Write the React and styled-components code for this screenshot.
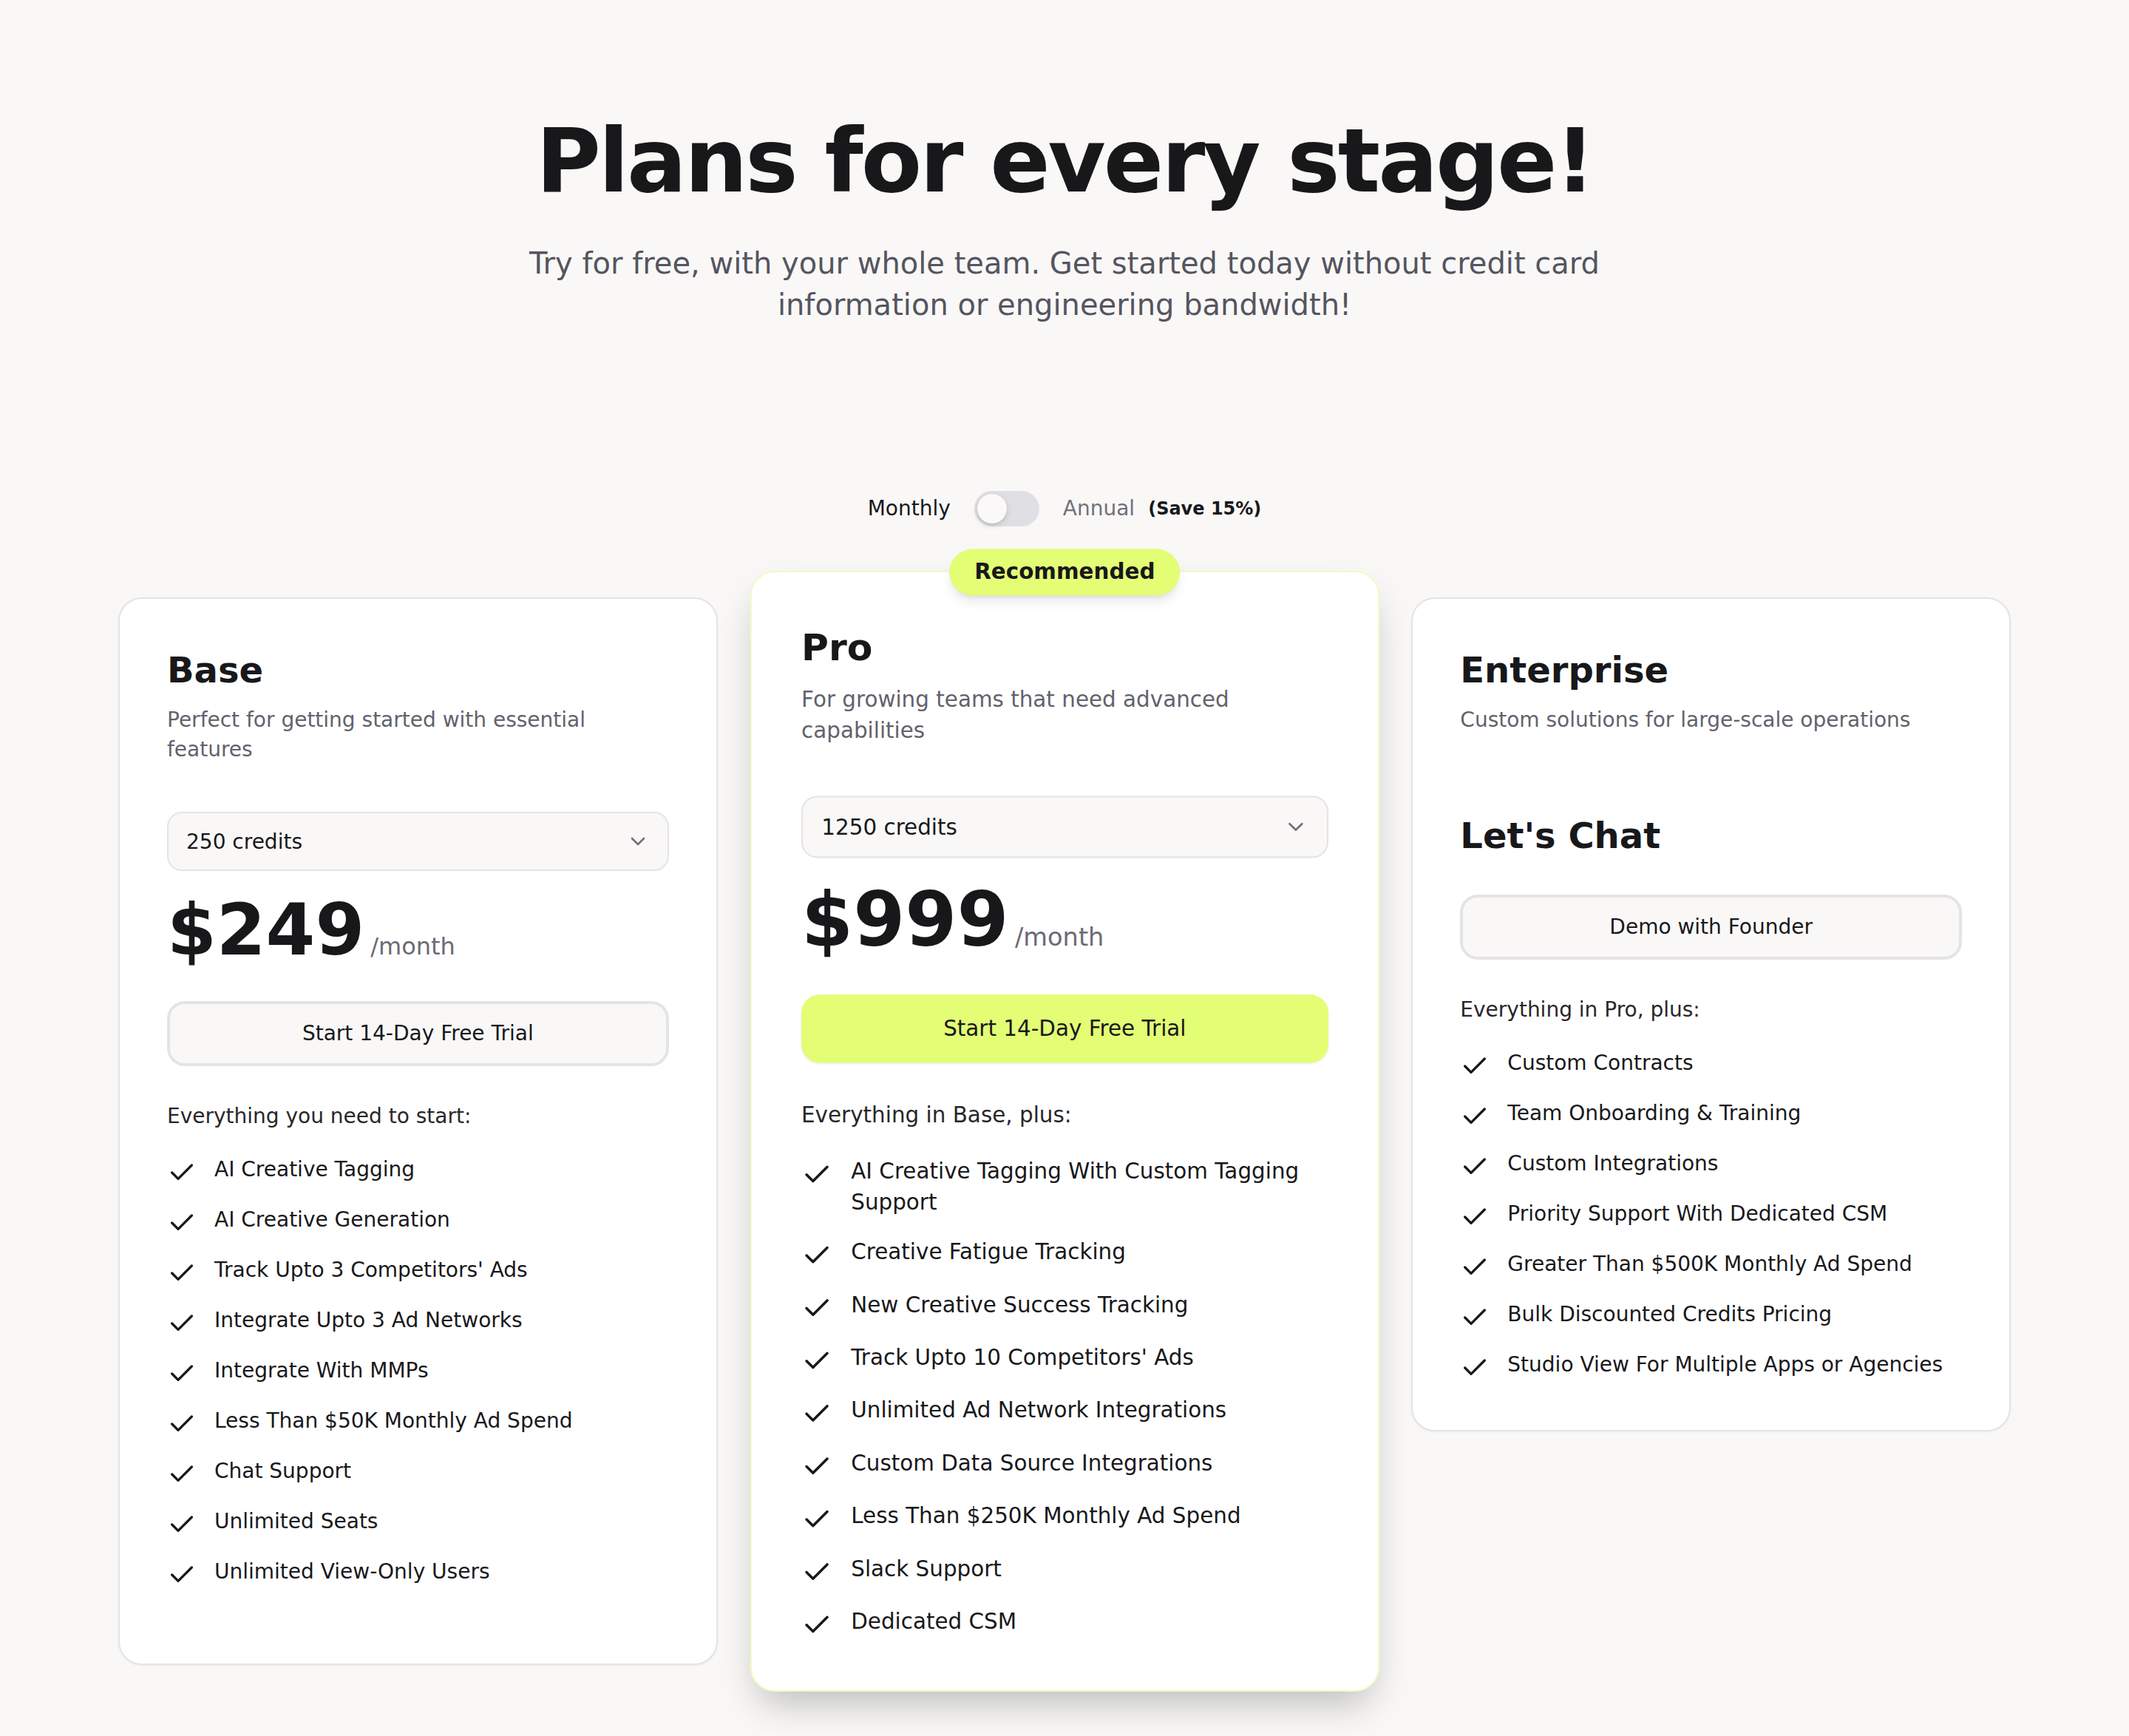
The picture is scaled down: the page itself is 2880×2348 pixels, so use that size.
import React from 'react';
import styled, { createGlobalStyle } from 'styled-components';
import { Check, ChevronDown } from 'lucide-react';

const LIME = '#e3fd75';

const GlobalStyle = createGlobalStyle`
  html, body { margin: 0; padding: 0; background: #f9f8f7; }
  body { font-family: "DejaVu Sans", "Noto Sans", sans-serif; color: #18181b; }
  *, *::before, *::after { box-sizing: border-box; }
`;

const Page = styled.main`
  min-height: 2348px;
  padding: 158px 0 120px;
  display: flex;
  flex-direction: column;
  align-items: center;
`;

const Title = styled.h1`
  margin: 0;
  font-size: 120px;
  line-height: 120px;
  font-weight: 700;
  letter-spacing: -3px;
  color: #18181b;
  text-align: center;
`;

const Subtitle = styled.p`
  margin: 50px 0 0;
  max-width: 1536px;
  font-size: 40px;
  line-height: 56px;
  color: #55555f;
  text-align: center;
`;

const ToggleRow = styled.div`
  margin-top: 224px;
  display: flex;
  align-items: center;
  gap: 32px;
  font-size: 28px;
  line-height: 40px;
`;

const ToggleLabel = styled.span`
  color: ${(p) => (p.$active ? '#18181b' : '#71717a')};
  display: flex;
  align-items: center;
`;

const Save = styled.span`
  margin-left: 18px;
  font-size: 24px;
  font-weight: 700;
  color: #18181b;
`;

const Track = styled.div`
  width: 88px;
  height: 48px;
  border-radius: 24px;
  background: #e0e0e4;
  padding: 4px;
  display: flex;
  align-items: center;
`;

const Knob = styled.div`
  width: 40px;
  height: 40px;
  border-radius: 50%;
  background: #faf9f8;
  box-shadow: 0 3px 8px rgba(0, 0, 0, 0.14), 0 1px 2px rgba(0, 0, 0, 0.1);
`;

const Grid = styled.section`
  margin-top: 96px;
  width: 2560px;
  display: grid;
  grid-template-columns: repeat(3, 1fr);
  gap: 64px;
  align-items: stretch;
`;

const Card = styled.article`
  position: relative;
  background: #ffffff;
  border: 2px solid ${(p) => (p.$featured ? '#eefcc6' : '#e4e4e7')};
  border-radius: 32px;
  padding: 64px;
  align-self: ${(p) => (p.$compact ? 'start' : 'stretch')};
  box-shadow: ${(p) =>
    p.$featured
      ? '0 25px 50px -12px rgba(0,0,0,0.25)'
      : '0 1px 3px rgba(0,0,0,0.06)'};
  transform: ${(p) => (p.$featured ? 'scale(1.05)' : 'none')};
  z-index: ${(p) => (p.$featured ? 1 : 0)};
`;

const Badge = styled.div`
  position: absolute;
  top: 0;
  left: 50%;
  transform: translate(-50%, -50%);
  background: ${LIME};
  color: #18181b;
  font-size: 28px;
  line-height: 40px;
  font-weight: 700;
  padding: 10px 32px;
  border-radius: 999px;
  white-space: nowrap;
  box-shadow: 0 10px 15px -3px rgba(0, 0, 0, 0.1), 0 4px 6px -4px rgba(0, 0, 0, 0.1);
`;

const PlanName = styled.h3`
  margin: 0;
  font-size: 48px;
  line-height: 64px;
  font-weight: 700;
  color: #18181b;
`;

const PlanDesc = styled.p`
  margin: 16px 0 64px;
  min-height: 80px;
  font-size: 28px;
  line-height: 40px;
  color: #62626c;
`;

const Select = styled.div`
  height: 80px;
  border: 2px solid #e4e4e7;
  border-radius: 20px;
  background: #f9f8f7;
  padding: 0 24px;
  display: flex;
  align-items: center;
  justify-content: space-between;
  font-size: 28px;
  color: #18181b;
`;

const PriceRow = styled.div`
  margin-top: 32px;
  height: 96px;
  display: flex;
  align-items: baseline;
`;

const Price = styled.span`
  font-size: 96px;
  line-height: 96px;
  font-weight: 700;
  color: #18181b;
`;

const Per = styled.span`
  margin-left: 8px;
  font-size: 32px;
  line-height: 40px;
  color: #6b6b75;
`;

const CTA = styled.button`
  margin-top: 48px;
  width: 100%;
  height: 88px;
  border-radius: 24px;
  border: 4px solid ${(p) => (p.$primary ? LIME : '#e4e4e7')};
  background: ${(p) => (p.$primary ? LIME : '#f9f8f7')};
  font-family: inherit;
  font-size: 28px;
  line-height: 40px;
  color: #18181b;
  display: flex;
  align-items: center;
  justify-content: center;
  box-shadow: ${(p) => (p.$primary ? '0 1px 3px rgba(0,0,0,0.08)' : 'none')};
  cursor: pointer;
`;

const ListHead = styled.p`
  margin: 48px 0 0;
  font-size: 28px;
  line-height: 40px;
  color: #27272a;
`;

const List = styled.ul`
  margin: 32px 0 0;
  padding: 0;
  list-style: none;
  display: flex;
  flex-direction: column;
  gap: 24px;
`;

const Item = styled.li`
  display: flex;
  align-items: flex-start;
  gap: 24px;
  font-size: 28px;
  line-height: 40px;
  color: #18181b;

  svg {
    flex: none;
    margin-top: 4px;
  }
`;

const plans = [
  {
    name: 'Base',
    desc: 'Perfect for getting started with essential features',
    credits: '250 credits',
    price: '$249',
    cta: 'Start 14-Day Free Trial',
    head: 'Everything you need to start:',
    features: [
      'AI Creative Tagging',
      'AI Creative Generation',
      "Track Upto 3 Competitors' Ads",
      'Integrate Upto 3 Ad Networks',
      'Integrate With MMPs',
      'Less Than $50K Monthly Ad Spend',
      'Chat Support',
      'Unlimited Seats',
      'Unlimited View-Only Users',
    ],
  },
  {
    name: 'Pro',
    featured: true,
    desc: 'For growing teams that need advanced capabilities',
    credits: '1250 credits',
    price: '$999',
    cta: 'Start 14-Day Free Trial',
    head: 'Everything in Base, plus:',
    features: [
      'AI Creative Tagging With Custom Tagging Support',
      'Creative Fatigue Tracking',
      'New Creative Success Tracking',
      "Track Upto 10 Competitors' Ads",
      'Unlimited Ad Network Integrations',
      'Custom Data Source Integrations',
      'Less Than $250K Monthly Ad Spend',
      'Slack Support',
      'Dedicated CSM',
    ],
  },
  {
    name: 'Enterprise',
    enterprise: true,
    desc: 'Custom solutions for large-scale operations',
    cta: 'Demo with Founder',
    head: 'Everything in Pro, plus:',
    features: [
      'Custom Contracts',
      'Team Onboarding & Training',
      'Custom Integrations',
      'Priority Support With Dedicated CSM',
      'Greater Than $500K Monthly Ad Spend',
      'Bulk Discounted Credits Pricing',
      'Studio View For Multiple Apps or Agencies',
    ],
  },
];

function PlanCard({ plan }) {
  return (
    <Card $featured={plan.featured} $compact={plan.enterprise}>
      {plan.featured && <Badge>Recommended</Badge>}
      <PlanName>{plan.name}</PlanName>
      <PlanDesc>{plan.desc}</PlanDesc>
      {plan.enterprise ? (
        <PlanName>Let's Chat</PlanName>
      ) : (
        <>
          <Select>
            <span>{plan.credits}</span>
            <ChevronDown size={32} color="#71717a" strokeWidth={2} />
          </Select>
          <PriceRow>
            <Price>{plan.price}</Price>
            <Per>/month</Per>
          </PriceRow>
        </>
      )}
      <CTA $primary={plan.featured}>{plan.cta}</CTA>
      <ListHead>{plan.head}</ListHead>
      <List>
        {plan.features.map((f) => (
          <Item key={f}>
            <Check size={40} color="#18181b" strokeWidth={2} />
            <span>{f}</span>
          </Item>
        ))}
      </List>
    </Card>
  );
}

export default function App() {
  return (
    <>
      <GlobalStyle />
      <Page>
        <Title>Plans for every stage!</Title>
        <Subtitle>
          Try for free, with your whole team. Get started today without credit card
          information or engineering bandwidth!
        </Subtitle>
        <ToggleRow>
          <ToggleLabel $active>Monthly</ToggleLabel>
          <Track>
            <Knob />
          </Track>
          <ToggleLabel>
            Annual
            <Save>(Save 15%)</Save>
          </ToggleLabel>
        </ToggleRow>
        <Grid>
          {plans.map((p) => (
            <PlanCard key={p.name} plan={p} />
          ))}
        </Grid>
      </Page>
    </>
  );
}
